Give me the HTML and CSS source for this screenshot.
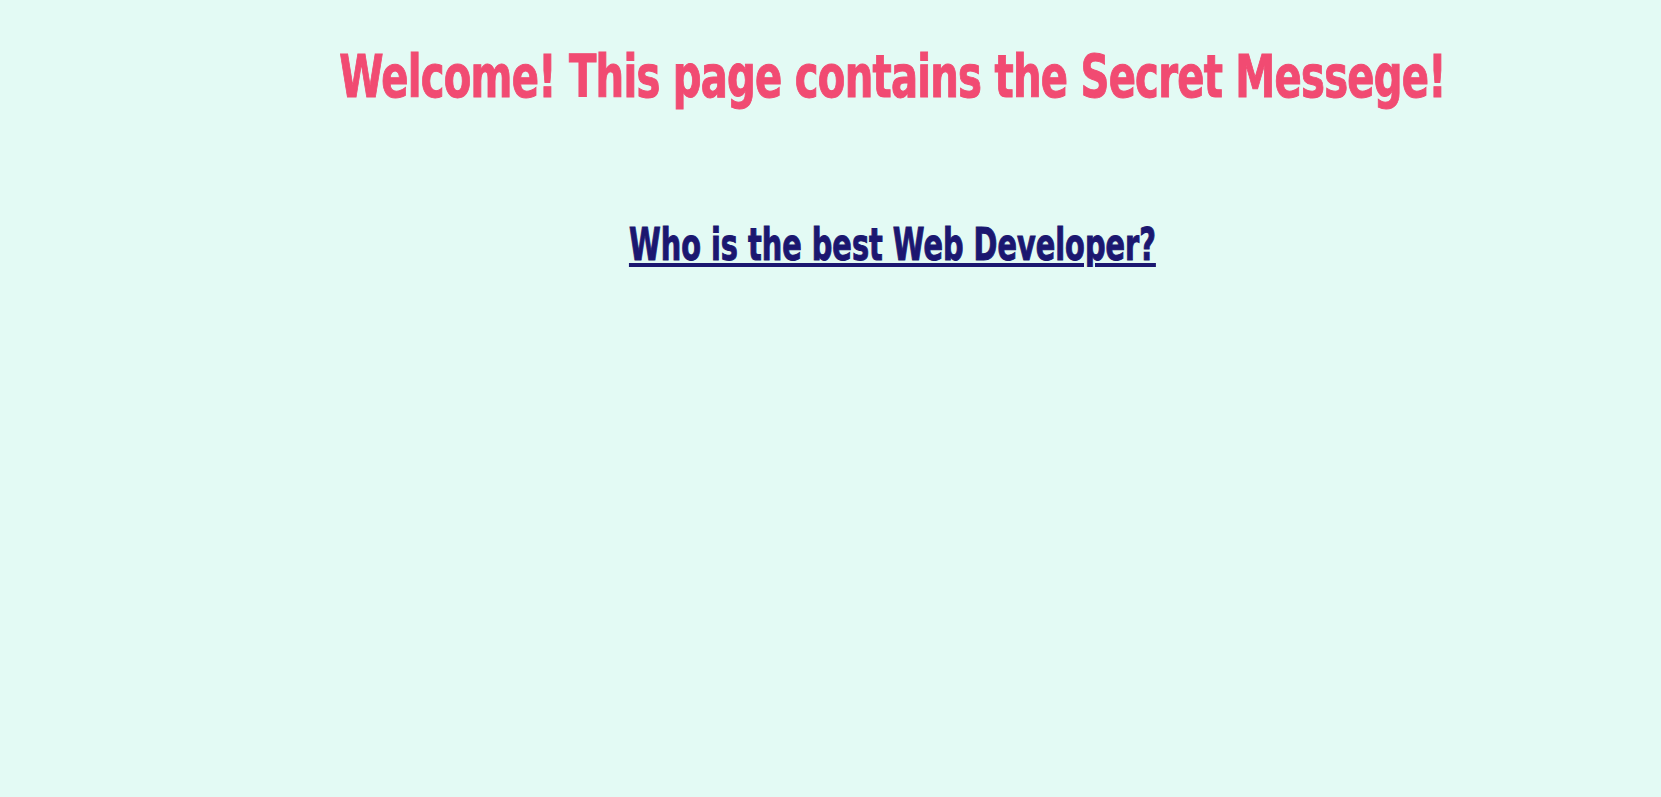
FILE: index.html
```html
<!DOCTYPE html>
<html>
<head>
<meta charset="utf-8">
<link rel="stylesheet" href="styles.css">
</head>
<body>
<main class="page">
  <h1 class="title"><span class="squeeze wide">Welcome! This page contains the Secret Messege!</span></h1>
  <p class="question"><a class="link squeeze" href="#">Who is the best Web Developer?</a></p>
</main>
</body>
</html>
```
FILE: styles.css
```css
html, body {
  margin: 0;
  padding: 0;
  background: #e3faf4;
}
.page {
  padding: 48px 0 0 124px;
  text-align: center;
  font-family: "DejaVu Sans Condensed", "DejaVu Sans", sans-serif;
  font-weight: bold;
}
.squeeze {
  display: inline-block;
  transform: scaleX(0.727);
  transform-origin: center;
  white-space: nowrap;
  -webkit-text-stroke: 1px currentColor;
}
.squeeze.wide {
  transform: scaleX(0.77);
}
.title {
  margin: 0;
  font-size: 58px;
  line-height: 1;
  color: #f14b72;
  font-weight: bold;
  letter-spacing: -1px;
}
.question {
  margin: 117px 0 0;
  font-size: 44px;
  line-height: 1;
}
.link {
  color: #1b1770;
  text-decoration: underline;
  text-decoration-thickness: 4px;
  text-underline-offset: 3px;
}
```
